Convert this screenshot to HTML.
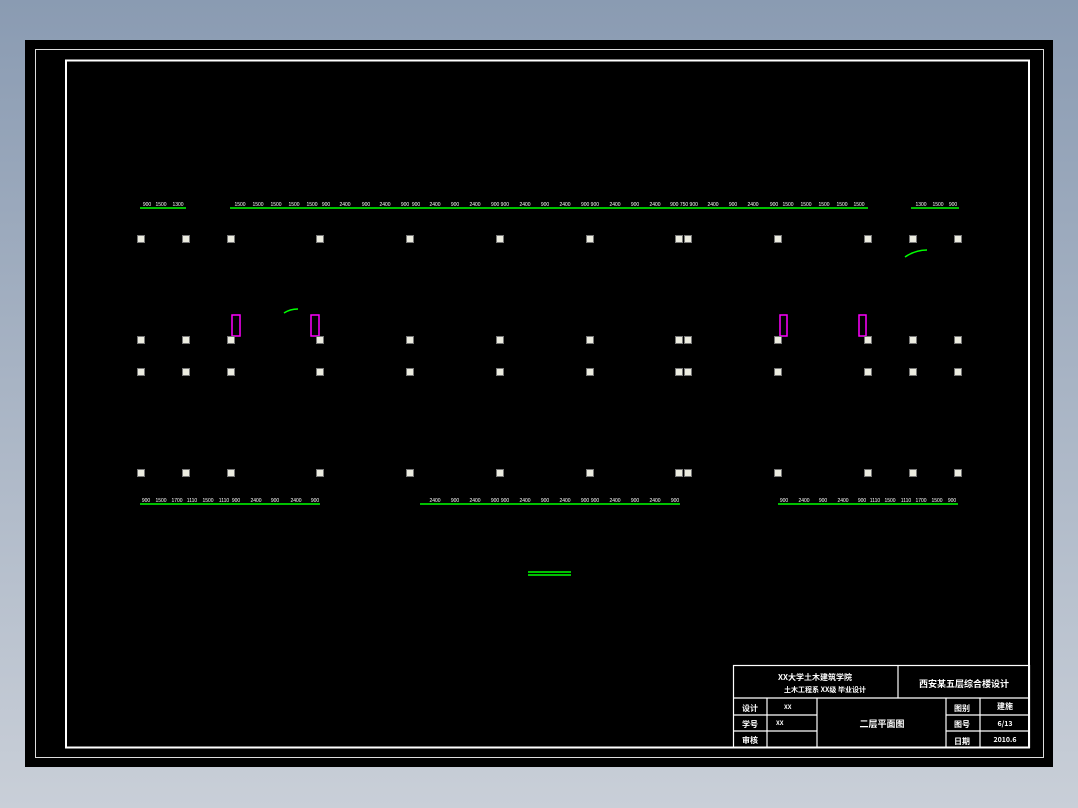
<!DOCTYPE html>
<html><head><meta charset="utf-8"><style>
html,body{margin:0;padding:0}
body{width:1078px;height:808px;background:linear-gradient(#8a9bb2,#c9cfd8);overflow:hidden;font-family:"Liberation Sans","Noto Sans CJK SC",sans-serif}
</style></head><body>
<svg width="1078" height="808" style="position:absolute;left:0;top:0">
<rect x="25" y="40" width="1028" height="727" fill="#000"/>
<rect x="35.5" y="49.5" width="1008" height="708" fill="none" stroke="#ddd" stroke-width="1"/>
<rect x="66" y="60.5" width="963" height="687" fill="none" stroke="#fff" stroke-width="2"/>
<g fill="#ecece0" stroke="#666" stroke-width="1" id="cols">
</g>
<g stroke="#00ff00" stroke-width="1.5" fill="none">
<line x1="140" y1="208" x2="186" y2="208"/>
<line x1="230" y1="208" x2="868" y2="208"/>
<line x1="911" y1="208" x2="959" y2="208"/>
<line x1="140" y1="504" x2="320" y2="504"/>
<line x1="420" y1="504" x2="680" y2="504"/>
<line x1="778" y1="504" x2="958" y2="504"/>
<line x1="528" y1="572" x2="571" y2="572"/>
<line x1="528" y1="575" x2="571" y2="575"/>
<path d="M905 257 Q915 250 927 250"/>
<path d="M284 313 Q290 309 298 309"/>
</g>
<g stroke="#ff00ff" stroke-width="1.5" fill="none">
<rect x="232" y="315" width="8" height="21"/>
<rect x="311" y="315" width="8" height="21"/>
<rect x="780" y="315" width="7" height="21"/>
<rect x="859" y="315" width="7" height="21"/>
</g>
<g fill="#fff" font-size="5" text-anchor="middle" id="dims">
<text x="147" y="206">900</text><text x="161" y="206">1500</text><text x="178" y="206">1300</text>
<text x="240" y="206">1500</text><text x="258" y="206">1500</text><text x="276" y="206">1500</text><text x="294" y="206">1500</text><text x="312" y="206">1500</text><text x="326" y="206">900</text><text x="345" y="206">2400</text><text x="366" y="206">900</text><text x="385" y="206">2400</text><text x="405" y="206">900</text><text x="416" y="206">900</text><text x="435" y="206">2400</text><text x="455" y="206">900</text><text x="475" y="206">2400</text><text x="500" y="206">900 900</text><text x="525" y="206">2400</text><text x="545" y="206">900</text><text x="565" y="206">2400</text><text x="590" y="206">900 900</text><text x="615" y="206">2400</text><text x="635" y="206">900</text><text x="655" y="206">2400</text><text x="684" y="206">900 750 900</text><text x="713" y="206">2400</text><text x="733" y="206">900</text><text x="753" y="206">2400</text><text x="774" y="206">900</text><text x="788" y="206">1500</text><text x="806" y="206">1500</text><text x="824" y="206">1500</text><text x="842" y="206">1500</text><text x="859" y="206">1500</text>
<text x="921" y="206">1300</text><text x="938" y="206">1500</text><text x="953" y="206">900</text>
<text x="146" y="502">900</text><text x="161" y="502">1500</text><text x="177" y="502">1700</text><text x="192" y="502">1110</text><text x="208" y="502">1500</text><text x="224" y="502">1110</text><text x="236" y="502">900</text><text x="256" y="502">2400</text><text x="275" y="502">900</text><text x="296" y="502">2400</text><text x="315" y="502">900</text>
<text x="435" y="502">2400</text><text x="455" y="502">900</text><text x="475" y="502">2400</text><text x="495" y="502">900</text><text x="505" y="502">900</text><text x="525" y="502">2400</text><text x="545" y="502">900</text><text x="565" y="502">2400</text><text x="585" y="502">900</text><text x="595" y="502">900</text><text x="615" y="502">2400</text><text x="635" y="502">900</text><text x="655" y="502">2400</text><text x="675" y="502">900</text>
<text x="784" y="502">900</text><text x="804" y="502">2400</text><text x="823" y="502">900</text><text x="843" y="502">2400</text><text x="862" y="502">900</text><text x="875" y="502">1110</text><text x="890" y="502">1500</text><text x="906" y="502">1110</text><text x="921" y="502">1700</text><text x="937" y="502">1500</text><text x="952" y="502">900</text>
</g>
<g stroke="#fff" stroke-width="1.2" fill="none">
<rect x="733.5" y="665.5" width="296" height="82"/>
<line x1="898" y1="665" x2="898" y2="698"/>
<line x1="733" y1="698" x2="1030" y2="698"/>
<line x1="733" y1="715" x2="817" y2="715"/>
<line x1="733" y1="731" x2="817" y2="731"/>
<line x1="946" y1="715" x2="1030" y2="715"/>
<line x1="946" y1="731" x2="1030" y2="731"/>
<line x1="767" y1="698" x2="767" y2="748"/>
<line x1="817" y1="698" x2="817" y2="748"/>
<line x1="946" y1="698" x2="946" y2="748"/>
<line x1="980" y1="698" x2="980" y2="748"/>
</g>
<g fill="#fff" font-size="8" font-weight="bold" font-family="'Noto Sans CJK SC',sans-serif">
<text x="815" y="680" text-anchor="middle">XX大学土木建筑学院</text>
<text x="825" y="692" text-anchor="middle" font-size="7">土木工程系 XX级  毕业设计</text>
<text x="964" y="687" text-anchor="middle" font-size="9">西安某五层综合楼设计</text>
<text x="750" y="711" text-anchor="middle">设计</text>
<text x="750" y="727" text-anchor="middle">学号</text>
<text x="750" y="743" text-anchor="middle">审核</text>
<text x="784" y="709" font-size="6">XX</text>
<text x="776" y="725" font-size="6">XX</text>
<text x="882" y="727" text-anchor="middle" font-size="9">二层平面图</text>
<text x="962" y="711" text-anchor="middle">图别</text>
<text x="962" y="727" text-anchor="middle">图号</text>
<text x="962" y="744" text-anchor="middle">日期</text>
<text x="1005" y="709" text-anchor="middle">建施</text>
<text x="1005" y="726" text-anchor="middle" font-size="7">6/13</text>
<text x="1005" y="742" text-anchor="middle" font-size="7">2010.6</text>
</g>
<g fill="#ecece0" stroke="#777" stroke-width="1">
<script>/* static below */</script>
</g>
<g fill="#ecece0" stroke="#777" stroke-width="1">
<rect x="137.5" y="235.5" width="7" height="7"/><rect x="182.5" y="235.5" width="7" height="7"/><rect x="227.5" y="235.5" width="7" height="7"/><rect x="316.5" y="235.5" width="7" height="7"/><rect x="406.5" y="235.5" width="7" height="7"/><rect x="496.5" y="235.5" width="7" height="7"/><rect x="586.5" y="235.5" width="7" height="7"/><rect x="675.5" y="235.5" width="7" height="7"/><rect x="684.5" y="235.5" width="7" height="7"/><rect x="774.5" y="235.5" width="7" height="7"/><rect x="864.5" y="235.5" width="7" height="7"/><rect x="909.5" y="235.5" width="7" height="7"/><rect x="954.5" y="235.5" width="7" height="7"/>
<rect x="137.5" y="336.5" width="7" height="7"/><rect x="182.5" y="336.5" width="7" height="7"/><rect x="227.5" y="336.5" width="7" height="7"/><rect x="316.5" y="336.5" width="7" height="7"/><rect x="406.5" y="336.5" width="7" height="7"/><rect x="496.5" y="336.5" width="7" height="7"/><rect x="586.5" y="336.5" width="7" height="7"/><rect x="675.5" y="336.5" width="7" height="7"/><rect x="684.5" y="336.5" width="7" height="7"/><rect x="774.5" y="336.5" width="7" height="7"/><rect x="864.5" y="336.5" width="7" height="7"/><rect x="909.5" y="336.5" width="7" height="7"/><rect x="954.5" y="336.5" width="7" height="7"/>
<rect x="137.5" y="368.5" width="7" height="7"/><rect x="182.5" y="368.5" width="7" height="7"/><rect x="227.5" y="368.5" width="7" height="7"/><rect x="316.5" y="368.5" width="7" height="7"/><rect x="406.5" y="368.5" width="7" height="7"/><rect x="496.5" y="368.5" width="7" height="7"/><rect x="586.5" y="368.5" width="7" height="7"/><rect x="675.5" y="368.5" width="7" height="7"/><rect x="684.5" y="368.5" width="7" height="7"/><rect x="774.5" y="368.5" width="7" height="7"/><rect x="864.5" y="368.5" width="7" height="7"/><rect x="909.5" y="368.5" width="7" height="7"/><rect x="954.5" y="368.5" width="7" height="7"/>
<rect x="137.5" y="469.5" width="7" height="7"/><rect x="182.5" y="469.5" width="7" height="7"/><rect x="227.5" y="469.5" width="7" height="7"/><rect x="316.5" y="469.5" width="7" height="7"/><rect x="406.5" y="469.5" width="7" height="7"/><rect x="496.5" y="469.5" width="7" height="7"/><rect x="586.5" y="469.5" width="7" height="7"/><rect x="675.5" y="469.5" width="7" height="7"/><rect x="684.5" y="469.5" width="7" height="7"/><rect x="774.5" y="469.5" width="7" height="7"/><rect x="864.5" y="469.5" width="7" height="7"/><rect x="909.5" y="469.5" width="7" height="7"/><rect x="954.5" y="469.5" width="7" height="7"/>
</g>
</svg>
</body></html>
